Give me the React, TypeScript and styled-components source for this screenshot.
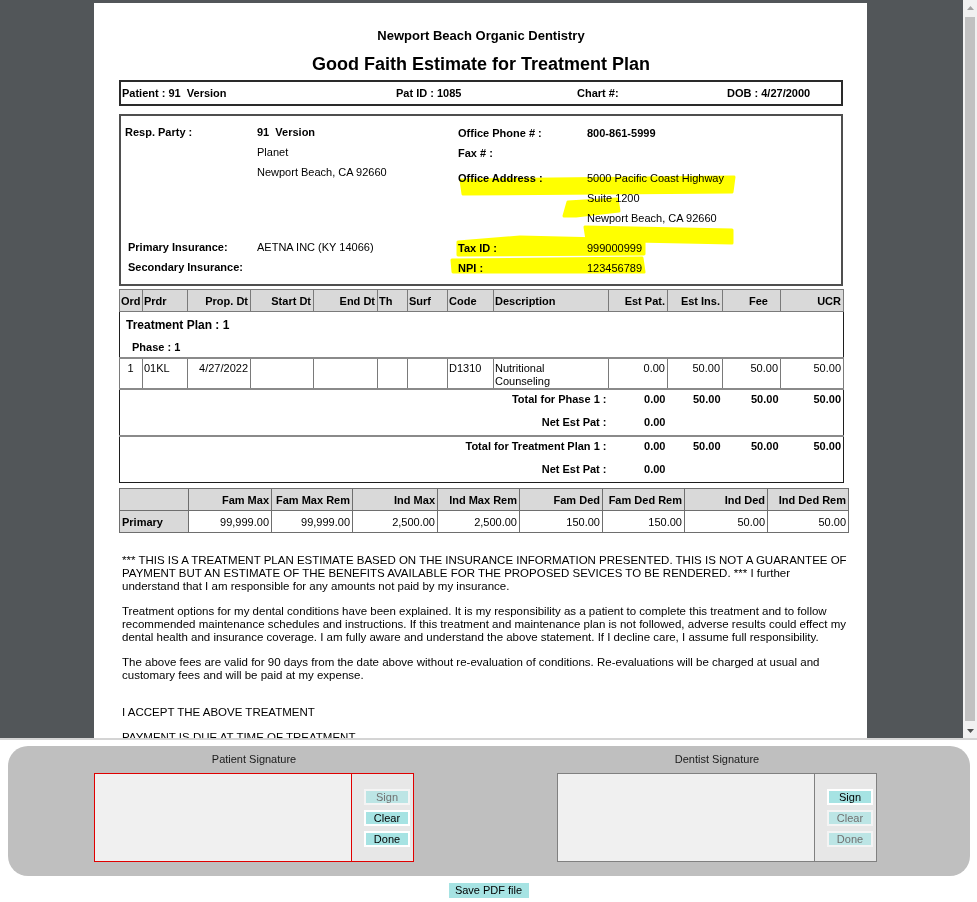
import styled, { createGlobalStyle } from "styled-components";

const GlobalStyle = createGlobalStyle`
  html, body {
    margin: 0;
    padding: 0;
    background: #ffffff;
  }
  body {
    font-family: "Liberation Sans", Arial, sans-serif;
    color: #000;
  }
`;

type Align = "left" | "right" | "center";

const planCols: { label: string; w: number; align: Align; pr?: number }[] = [
  { label: "Ord", w: 23, align: "left" },
  { label: "Prdr", w: 45, align: "left" },
  { label: "Prop. Dt", w: 63, align: "right" },
  { label: "Start Dt", w: 63, align: "right" },
  { label: "End Dt", w: 64, align: "right" },
  { label: "Th", w: 30, align: "left" },
  { label: "Surf", w: 40, align: "left" },
  { label: "Code", w: 46, align: "left" },
  { label: "Description", w: 115, align: "left" },
  { label: "Est Pat.", w: 59, align: "right" },
  { label: "Est Ins.", w: 55, align: "right" },
  { label: "Fee", w: 58, align: "right", pr: 12 },
  { label: "UCR", w: 63, align: "right" },
];

const insCols = [
  { label: "", w: 69 },
  { label: "Fam Max", w: 83 },
  { label: "Fam Max Rem", w: 81 },
  { label: "Ind Max", w: 85 },
  { label: "Ind Max Rem", w: 82 },
  { label: "Fam Ded", w: 83 },
  { label: "Fam Ded Rem", w: 82 },
  { label: "Ind Ded", w: 83 },
  { label: "Ind Ded Rem", w: 81 },
];

const insValues = ["99,999.00", "99,999.00", "2,500.00", "2,500.00", "150.00", "150.00", "50.00", "50.00"];

const paragraphs = [
  [
    "*** THIS IS A TREATMENT PLAN ESTIMATE BASED ON THE INSURANCE INFORMATION PRESENTED. THIS IS NOT A GUARANTEE OF",
    "PAYMENT BUT AN ESTIMATE OF THE BENEFITS AVAILABLE FOR THE PROPOSED SEVICES TO BE RENDERED. *** I further",
    "understand that I am responsible for any amounts not paid by my insurance.",
  ],
  [
    "Treatment options for my dental conditions have been explained. It is my responsibility as a patient to complete this treatment and to follow",
    "recommended maintenance schedules and instructions. If this treatment and maintenance plan is not followed, adverse results could effect my",
    "dental health and insurance coverage. I am fully aware and understand the above statement. If I decline care, I assume full responsibility.",
  ],
  [
    "The above fees are valid for 90 days from the date above without re-evaluation of conditions. Re-evaluations will be charged at usual and",
    "customary fees and will be paid at my expense.",
  ],
];

export default function App() {
  return (
    <>
      <GlobalStyle />
      <Viewer>
        <PageArea>
          <Page>
            <Practice>Newport Beach Organic Dentistry</Practice>
            <Title>Good Faith Estimate for Treatment Plan</Title>

            <PatientBar>
              <span>Patient : 91&nbsp; Version</span>
              <span>Pat ID : 1085</span>
              <span>Chart #:</span>
              <span>DOB : 4/27/2000</span>
            </PatientBar>

            <InfoBox>
              <LeftCol>
                <Field $label={132} $indent={4}>
                  <Label>Resp. Party :</Label>
                  <Values>
                    <Value $bold>91&nbsp; Version</Value>
                    <Value>Planet</Value>
                    <Value $h={21}>Newport Beach, CA 92660</Value>
                  </Values>
                </Field>
                <InsBlock>
                  <Field $label={129} $indent={7}>
                    <Label>Primary Insurance:</Label>
                    <Value>AETNA INC (KY 14066)</Value>
                  </Field>
                  <Field $label={129} $indent={7}>
                    <Label>Secondary Insurance:</Label>
                    <Value />
                  </Field>
                </InsBlock>
              </LeftCol>
              <RightCol>
                <Field $label={129}>
                  <Label>Office Phone # :</Label>
                  <Value $bold>800-861-5999</Value>
                </Field>
                <Field $label={129}>
                  <Label>Fax # :</Label>
                  <Value />
                </Field>
                <Field $label={129} $gap={5}>
                  <Label>Office Address :</Label>
                  <Values>
                    <Value $h={21}>5000 Pacific Coast Highway</Value>
                    <Value $h={19}>Suite 1200</Value>
                    <Value>Newport Beach, CA 92660</Value>
                  </Values>
                </Field>
                <InsBlock>
                  <Field $label={129}>
                    <Label>Tax ID :</Label>
                    <Value>999000999</Value>
                  </Field>
                  <Field $label={129}>
                    <Label>NPI :</Label>
                    <Value>123456789</Value>
                  </Field>
                </InsBlock>
              </RightCol>
              <Highlights viewBox="0 0 720 168" width="720" height="168">
                <polygon points="340,64 613,61 611,76 342,78" />
                <polygon points="447,86 496,83 498,95 455,100 443,100" />
                <polygon points="464,111 611,114 611,127 466,124" />
                <polygon points="337,126 399,121 523,124 523,138 337,139" />
                <polygon points="331,144 521,142 523,156 332,156" />
              </Highlights>
            </InfoBox>

            <PlanTable>
              <colgroup>
                {planCols.map((c) => (
                  <col key={c.label} style={{ width: c.w }} />
                ))}
              </colgroup>
              <thead>
                <tr>
                  {planCols.map((c) => (
                    <HeadCell key={c.label} $align={c.align} $pr={c.pr}>
                      {c.label}
                    </HeadCell>
                  ))}
                </tr>
              </thead>
              <tbody>
                <tr>
                  <PlanLabel colSpan={13}>Treatment Plan : 1</PlanLabel>
                </tr>
                <tr>
                  <PhaseLabel colSpan={13}>Phase : 1</PhaseLabel>
                </tr>
                <tr>
                  <ItemCell $align="center">1</ItemCell>
                  <ItemCell>01KL</ItemCell>
                  <ItemCell $align="right">4/27/2022</ItemCell>
                  <ItemCell />
                  <ItemCell />
                  <ItemCell />
                  <ItemCell />
                  <ItemCell>D1310</ItemCell>
                  <ItemCell>
                    Nutritional
                    <br />
                    Counseling
                  </ItemCell>
                  <ItemCell $align="right">0.00</ItemCell>
                  <ItemCell $align="right">50.00</ItemCell>
                  <ItemCell $align="right">50.00</ItemCell>
                  <ItemCell $align="right">50.00</ItemCell>
                </tr>
                <SumRow label="Total for Phase 1 :" values={["0.00", "50.00", "50.00", "50.00"]} h={18} />
                <SumRow label="Net Est Pat :" values={["0.00"]} h={27} />
                <SumRow label="Total for Treatment Plan 1 :" values={["0.00", "50.00", "50.00", "50.00"]} h={18} topLine />
                <SumRow label="Net Est Pat :" values={["0.00"]} h={27} />
              </tbody>
            </PlanTable>

            <InsTable>
              <colgroup>
                {insCols.map((c, i) => (
                  <col key={i} style={{ width: c.w }} />
                ))}
              </colgroup>
              <tbody>
                <tr>
                  {insCols.map((c, i) => (
                    <InsCell key={i} $head>
                      {c.label}
                    </InsCell>
                  ))}
                </tr>
                <tr>
                  <InsCell $head $left>
                    Primary
                  </InsCell>
                  {insValues.map((v, i) => (
                    <InsCell key={i}>{v}</InsCell>
                  ))}
                </tr>
              </tbody>
            </InsTable>

            <Terms>
              {paragraphs.map((lines, i) => (
                <Paragraph key={i}>
                  {lines.map((l, j) => (
                    <Line key={j}>{l}</Line>
                  ))}
                </Paragraph>
              ))}
              <Paragraph $top={24}>
                <Line>I ACCEPT THE ABOVE TREATMENT</Line>
              </Paragraph>
              <Paragraph>
                <Line>PAYMENT IS DUE AT TIME OF TREATMENT</Line>
              </Paragraph>
            </Terms>
          </Page>
        </PageArea>
        <Scrollbar>
          <Arrow>
            <svg width="7" height="4" viewBox="0 0 7 4">
              <polygon points="0,4 7,4 3.5,0" fill="#a3a3a3" />
            </svg>
          </Arrow>
          <Thumb />
          <Arrow>
            <svg width="7" height="4" viewBox="0 0 7 4">
              <polygon points="0,0 7,0 3.5,4" fill="#505050" />
            </svg>
          </Arrow>
        </Scrollbar>
      </Viewer>

      <SigPanel>
        <SigBlock>
          <SigTitle>Patient Signature</SigTitle>
          <SigBox $border="#e00000">
            <Canvas $border="#e00000" />
            <Controls>
              <SigButton disabled>Sign</SigButton>
              <SigButton>Clear</SigButton>
              <SigButton>Done</SigButton>
            </Controls>
          </SigBox>
        </SigBlock>
        <SigBlock>
          <SigTitle>Dentist Signature</SigTitle>
          <SigBox $border="#808080">
            <Canvas $border="#808080" />
            <Controls>
              <SigButton>Sign</SigButton>
              <SigButton disabled>Clear</SigButton>
              <SigButton disabled>Done</SigButton>
            </Controls>
          </SigBox>
        </SigBlock>
      </SigPanel>
      <SaveButton>Save PDF file</SaveButton>
    </>
  );
}

function SumRow(props: { label: string; values: string[]; h: number; topLine?: boolean }) {
  const { label, values, h, topLine } = props;
  return (
    <tr>
      <SumCell colSpan={9} $h={h} $top={topLine}>
        {label}
      </SumCell>
      {[0, 1, 2, 3].map((i) => (
        <SumCell key={i} $h={h} $top={topLine}>
          {values[i] || ""}
        </SumCell>
      ))}
    </tr>
  );
}

const Viewer = styled.div`
  display: flex;
  height: 738px;
  background: #525659;
  overflow: hidden;
  border-bottom: 2px solid #d4d4d4;
`;

const PageArea = styled.div`
  flex: 1;
  display: flex;
  justify-content: center;
  padding-right: 2px;
`;

const Page = styled.div`
  width: 773px;
  margin-top: 3px;
  padding: 24px 24px 40px 25px;
  box-sizing: border-box;
  background: #ffffff;
  align-self: flex-start;
`;

const Practice = styled.div`
  text-align: center;
  font-size: 13px;
  line-height: 16px;
  font-weight: bold;
  padding-top: 1px;
`;

const Title = styled.div`
  margin-top: 9px;
  text-align: center;
  font-size: 18px;
  line-height: 22px;
  font-weight: bold;
`;

const PatientBar = styled.div`
  margin-top: 5px;
  height: 26px;
  box-sizing: border-box;
  border: 2px solid #2a2a2a;
  display: grid;
  grid-template-columns: 274px 181px 150px auto;
  align-items: center;
  padding-left: 1px;
  font-size: 11px;
  font-weight: bold;
`;

const InfoBox = styled.div`
  position: relative;
  margin-top: 8px;
  height: 172px;
  box-sizing: border-box;
  border: 2px solid #4f4f4f;
  display: flex;
  font-size: 11px;
`;

const LeftCol = styled.div`
  width: 337px;
  display: flex;
  flex-direction: column;
  padding: 6px 0 7px;
  box-sizing: border-box;
`;

const RightCol = styled.div`
  flex: 1;
  display: flex;
  flex-direction: column;
  padding: 7px 0 6px;
  box-sizing: border-box;
`;

const InsBlock = styled.div`
  margin-top: auto;
`;

const Field = styled.div<{ $label: number; $indent?: number; $gap?: number }>`
  display: grid;
  grid-template-columns: ${(p) => p.$label}px 1fr;
  padding-left: ${(p) => p.$indent || 0}px;
  margin-top: ${(p) => p.$gap || 0}px;
  line-height: 20px;
`;

const Label = styled.div`
  font-weight: bold;
`;

const Values = styled.div`
  display: flex;
  flex-direction: column;
`;

const Value = styled.div<{ $bold?: boolean; $h?: number }>`
  font-weight: ${(p) => (p.$bold ? "bold" : "normal")};
  height: ${(p) => p.$h || 20}px;
  line-height: ${(p) => p.$h || 20}px;
`;

const Highlights = styled.svg`
  position: absolute;
  left: 0;
  top: 0;
  pointer-events: none;
  mix-blend-mode: multiply;

  polygon {
    fill: #ffff00;
    stroke: #ffff00;
    stroke-width: 3;
    stroke-linejoin: round;
  }
`;

const PlanTable = styled.table`
  margin-top: 3px;
  width: 724px;
  table-layout: fixed;
  border-collapse: collapse;
  border: 1px solid #1e1e1e;
  font-size: 11px;
`;

const HeadCell = styled.th<{ $align: Align; $pr?: number }>`
  height: 21px;
  padding: 0 ${(p) => p.$pr || 2}px 0 1px;
  background: #d9d9d9;
  border: 1px solid #7a7a7a;
  text-align: ${(p) => p.$align};
  font-weight: bold;
  white-space: nowrap;
  overflow: hidden;
`;

const PlanLabel = styled.td`
  height: 24px;
  padding: 1px 0 0 6px;
  font-size: 12px;
  font-weight: bold;
`;

const PhaseLabel = styled.td`
  height: 20px;
  padding: 0 0 0 12px;
  font-weight: bold;
`;

const ItemCell = styled.td<{ $align?: Align }>`
  height: 31px;
  padding: 3px 2px 0 1px;
  box-sizing: border-box;
  vertical-align: top;
  text-align: ${(p) => p.$align || "left"};
  border: 1px solid #7a7a7a;
  border-top: 2px solid #8a8a8a;
  border-bottom: 2px solid #8a8a8a;
  line-height: 13px;
`;

const SumCell = styled.td<{ $h: number; $top?: boolean }>`
  height: ${(p) => p.$h}px;
  padding: 0 2px 0 0;
  text-align: right;
  font-weight: bold;
  border-top: ${(p) => (p.$top ? "2px solid #8a8a8a" : "none")};
`;

const InsTable = styled.table`
  margin-top: 5px;
  width: 729px;
  table-layout: fixed;
  border-collapse: collapse;
  border: 1px solid #2a2a2a;
  font-size: 11px;
`;

const InsCell = styled.td<{ $head?: boolean; $left?: boolean }>`
  height: 21px;
  padding: 0 2px 0 2px;
  border: 1px solid #6e6e6e;
  background: ${(p) => (p.$head ? "#d9d9d9" : "#ffffff")};
  font-weight: ${(p) => (p.$head ? "bold" : "normal")};
  text-align: ${(p) => (p.$left ? "left" : "right")};
  white-space: nowrap;
`;

const Terms = styled.div`
  padding: 21px 0 0 3px;
  font-size: 11.5px;
  line-height: 13px;
`;

const Paragraph = styled.p<{ $top?: number }>`
  margin: ${(p) => (p.$top !== undefined ? p.$top : 12)}px 0 0;

  &:first-child {
    margin-top: 0;
  }
`;

const Line = styled.span`
  display: block;
  white-space: nowrap;
`;

const Scrollbar = styled.div`
  width: 14px;
  background: #f1f1f1;
  display: flex;
  flex-direction: column;
`;

const Arrow = styled.div`
  height: 15px;
  display: flex;
  align-items: center;
  justify-content: center;
`;

const Thumb = styled.div`
  flex: 1;
  margin: 2px 2px;
  background: #c1c1c1;
`;

const SigPanel = styled.div`
  margin: 6px 7px 0 8px;
  height: 130px;
  box-sizing: border-box;
  background: #bfbfbf;
  border-radius: 20px;
  display: flex;
  gap: 143px;
  padding-left: 86px;
`;

const SigBlock = styled.div`
  width: 320px;
  display: flex;
  flex-direction: column;
  align-items: center;
`;

const SigTitle = styled.div`
  padding-top: 6px;
  margin-bottom: 7px;
  font-size: 11px;
  line-height: 14px;
  color: #1a1a1a;
`;

const SigBox = styled.div<{ $border: string }>`
  width: 320px;
  height: 89px;
  box-sizing: border-box;
  border: 1px solid ${(p) => p.$border};
  display: flex;
`;

const Canvas = styled.div<{ $border: string }>`
  width: 256px;
  background: #f0f0f0;
  border-right: 1px solid ${(p) => p.$border};
`;

const Controls = styled.div`
  flex: 1;
  background: #e7e7e7;
  display: flex;
  flex-direction: column;
  gap: 5px;
  padding: 15px 0 0 12px;
`;

const SigButton = styled.button`
  width: 46px;
  height: 16px;
  box-sizing: border-box;
  padding: 0;
  border: 2px solid #ffffff;
  background: #a6e3e3;
  color: #000;
  font-family: "Liberation Sans", Arial, sans-serif;
  font-size: 11px;
  line-height: 12px;

  &:disabled {
    border-color: #f4f4f4;
    background: #bce5e5;
    color: #707070;
  }
`;

const SaveButton = styled.button`
  display: block;
  margin: 7px auto 0;
  width: 80px;
  height: 15px;
  padding: 0;
  border: none;
  background: #a6e3e3;
  color: #000;
  font-family: "Liberation Sans", Arial, sans-serif;
  font-size: 11px;
  line-height: 15px;
`;
